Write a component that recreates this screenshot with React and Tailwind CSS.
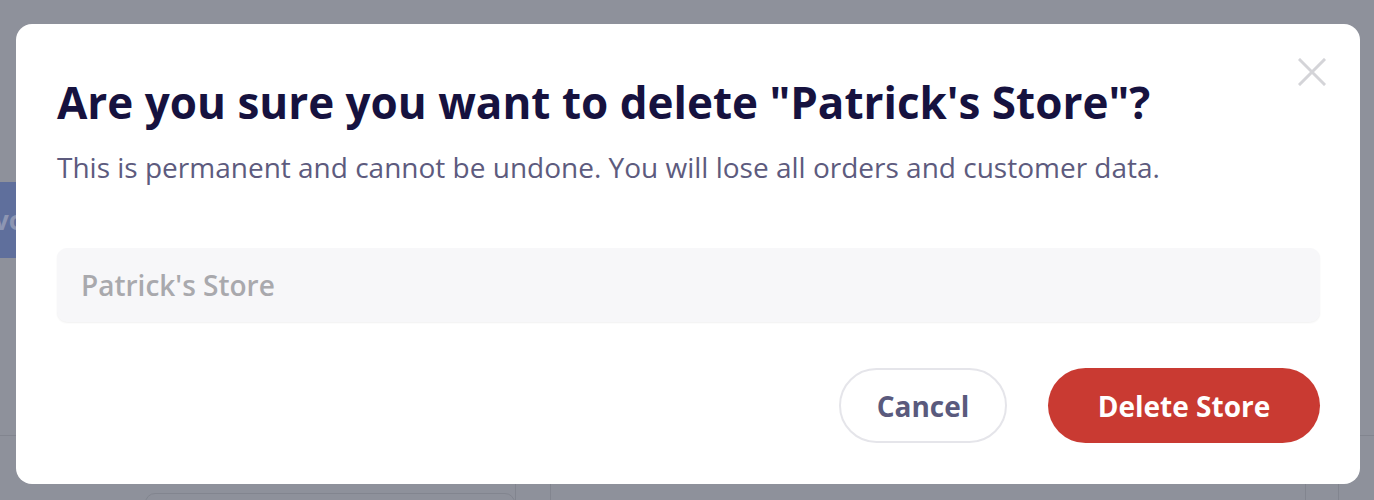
import React from "react";

export default function App() {
  return (
    <div className="relative w-[1374px] h-[500px] overflow-hidden bg-[#8e919b]" style={{ fontFamily: '"Open Sans", "Noto Sans", sans-serif' }}>
      {/* underlying page hints */}
      <div className="absolute left-0 top-[182px] w-[40px] h-[76px] bg-[#5f6f9c] flex items-center">
        <span className="ml-[-6px] text-[26px] font-bold text-[#8d96b3]">vo</span>
      </div>
      <div className="absolute left-0 top-[435px] w-[20px] h-[1px] bg-[#82858f]" />
      <div className="absolute right-0 top-[435px] w-[20px] h-[1px] bg-[#82858f]" />
      <div className="absolute left-[145px] top-[493px] w-[370px] h-[20px] rounded-[10px] border border-[#82858f]" />
      <div className="absolute left-[515px] top-[484px] w-[1px] h-[16px] bg-[#82858f]" />
      <div className="absolute left-[550px] top-[484px] w-[1px] h-[16px] bg-[#82858f]" />
      <div className="absolute left-[1305px] top-[484px] w-[1px] h-[16px] bg-[#82858f]" />
      <div className="absolute left-[1338px] top-[484px] w-[1px] h-[16px] bg-[#82858f]" />

      {/* modal */}
      <div className="absolute left-[16px] top-[24px] w-[1344px] h-[460px] rounded-[16px] bg-white pl-[41px] pr-[40px] pt-[52px] pb-[41px] flex flex-col">
        <button className="absolute right-[34px] top-[34px] w-[28px] h-[28px] flex items-center justify-center">
          <svg width="28" height="28" viewBox="0 0 28 28" fill="none" stroke="#d4d4d8" strokeWidth="3" strokeLinecap="square">
            <path d="M2 2 L26 26 M26 2 L2 26" />
          </svg>
        </button>
        <h1 className="text-[44px] leading-[52px] font-bold text-[#16123f]">
          Are you sure you want to delete "Patrick's Store"?
        </h1>
        <p className="mt-[21px] text-[28px] leading-[36px] text-[#5d5b7e]">
          This is permanent and cannot be undone. You will lose all orders and customer data.
        </p>
        <div className="mt-[63px] h-[74px] rounded-[10px] bg-[#f7f7f9] shadow-[0_1px_2px_rgba(0,0,0,0.06)] flex items-center px-[24px]">
          <span className="text-[28px] font-semibold text-[#a9a9ad]">Patrick's Store</span>
        </div>
        <div className="mt-[46px] flex justify-end gap-[41px]">
          <button className="w-[168px] h-[75px] rounded-full border-2 border-[#e5e5ea] bg-white text-[28px] font-bold text-[#5a5a7d]">
            Cancel
          </button>
          <button className="w-[272px] h-[75px] rounded-full bg-[#c93a32] text-[28px] font-bold text-white">
            Delete Store
          </button>
        </div>
      </div>
    </div>
  );
}
